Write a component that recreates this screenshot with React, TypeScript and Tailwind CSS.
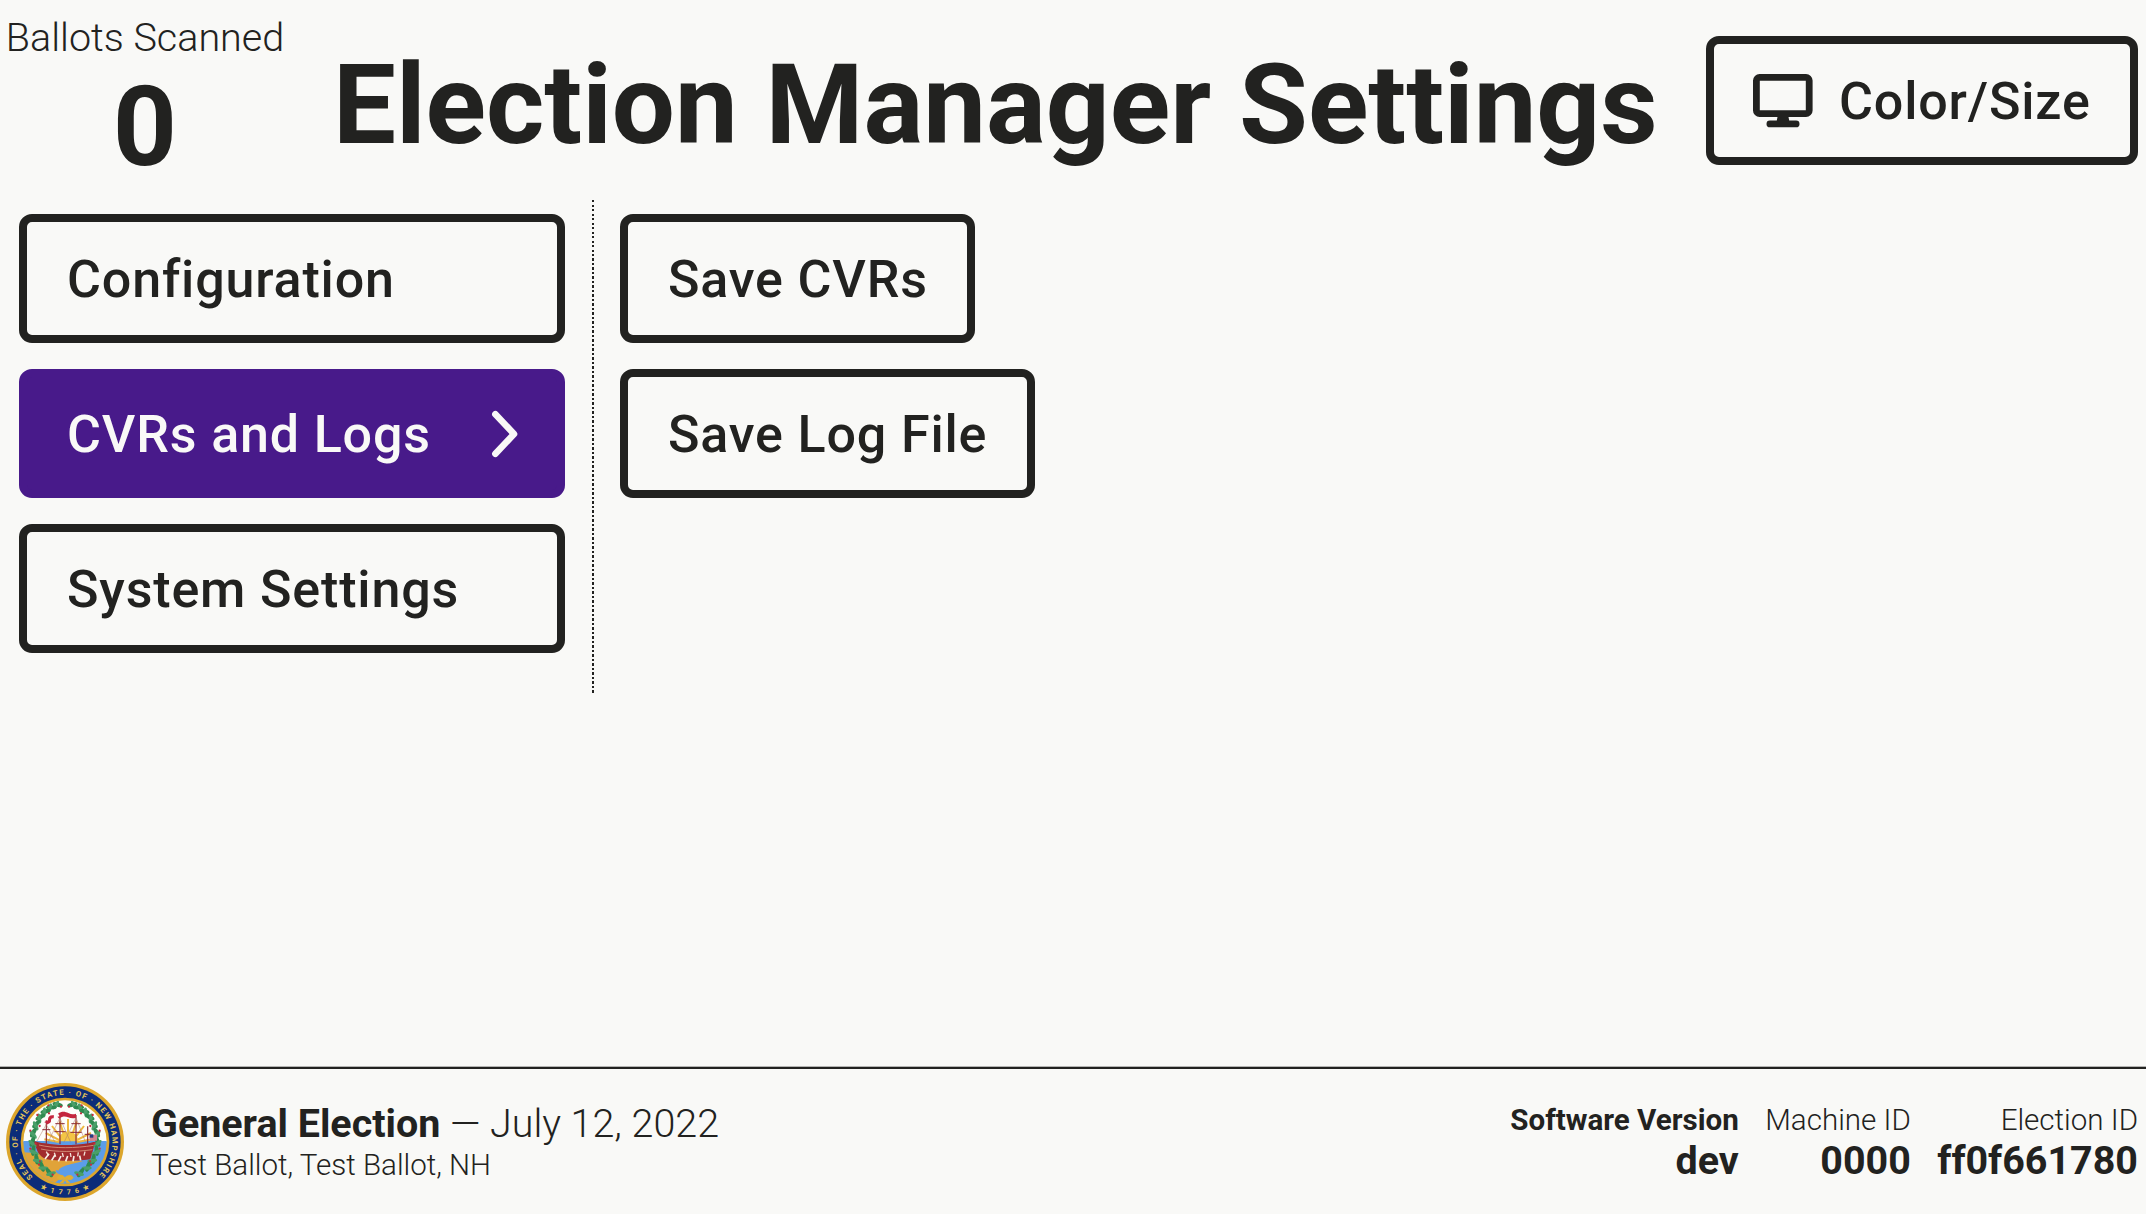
import type { ReactNode } from "react";

function Button({
  children,
  active = false,
  className = "",
}: {
  children: ReactNode;
  active?: boolean;
  className?: string;
}) {
  const tone = active
    ? "border-[#481a8a] bg-[#481a8a] text-[#f9f9f7]"
    : "border-[#222220] text-[#222220]";
  return (
    <button
      type="button"
      className={`flex h-[129px] items-center whitespace-nowrap rounded-[13px] border-8 px-10 pt-[3px] text-left text-[52px] leading-none font-medium tracking-[0.84px] ${tone} ${className}`}
    >
      {children}
    </button>
  );
}

function DisplayIcon() {
  return (
    <svg width="60" height="54" viewBox="0 0 60 54" className="-mt-[2px] shrink-0" aria-hidden="true">
      <rect x="3.4" y="3.4" width="52.8" height="36.2" rx="3.2" fill="none" stroke="#222220" strokeWidth="6.8" />
      <path
        d="M24.6 42.5h10.8l.8 4h6.9a3.4 3.4 0 0 1 0 6.8H16.9a3.4 3.4 0 0 1 0-6.8h6.9z"
        fill="#222220"
      />
    </svg>
  );
}

function Chevron() {
  return (
    <svg width="28" height="48" viewBox="0 0 28 48" className="-mt-[2px] -mr-[2px] shrink-0" aria-hidden="true">
      <path
        d="M4.4 4.2 23 24 4.4 43.8"
        fill="none"
        stroke="#f9f9f7"
        strokeWidth="6.6"
        strokeLinecap="round"
        strokeLinejoin="round"
      />
    </svg>
  );
}

const leaves: [number, number, number][] = [
  [174, 133, 160], [155, 141, 145], [138, 153, 130], [122, 170, 115], [110, 191, 100],
  [101, 217, 85], [98, 244, 75], [101, 271, 60], [111, 297, 45], [127, 319, 35], [149, 337, 20],
];

function Wreath() {
  return (
    <>
      {leaves.map(([x, y, a], i) => (
        <g key={i} transform={`translate(${x} ${y})`}>
          <ellipse rx="16" ry="6.5" fill="#2f8a50" transform={`rotate(${a + 35})`} />
          <ellipse cx="4" cy="4" rx="15" ry="5.5" fill="#4a9f69" transform={`rotate(${a - 35})`} />
          <circle cx={i % 2 ? -9 : 10} cy={i % 2 ? -6 : 6} r="3.4" fill="#c22d3f" />
        </g>
      ))}
    </>
  );
}

function StateSeal() {
  return (
    <svg
      width="118"
      height="118"
      viewBox="19 68 354 354"
      className="block"
      role="img"
      aria-label="Seal of the State of New Hampshire"
    >
      <defs>
        <clipPath id="scene">
          <circle cx="196" cy="245" r="125" />
        </clipPath>
        <path id="arc-top" d="M100 350A142 142 0 1 1 292 350" />
        <path id="arc-bottom" d="M122 384A157 157 0 0 0 270 384" />
      </defs>
      <circle cx="196" cy="245" r="177" fill="#dca62c" />
      <circle cx="196" cy="245" r="167" fill="#0b2c79" />
      <circle cx="196" cy="245" r="133" fill="#dca62c" />
      <g clipPath="url(#scene)">
        <rect x="70" y="118" width="252" height="126" fill="#fdfdfa" />
        <rect x="70" y="242" width="252" height="130" fill="#5b9de8" />
        <path
          d="M205 232V176M196 234l-16-50M214 234l17-50M188 237l-31-40M222 237l31-40M182 241l-44-23M228 241l46-23M178 245l-44-8M232 245l46-8"
          stroke="#edb83f"
          strokeWidth="6"
        />
        <path d="M176 243a30 30 0 0 1 60 0z" fill="#f3c545" />
        <path
          d="M70 276c30 2 62 2 90 14 30 8 60 10 90 12-25 8-52 12-66 20-14 9-4 18 8 24l-30 24c-45-10-85-45-92-94z"
          fill="#e0a339"
        />
        <path
          d="M96 238c14 7 26 9 40 11 40 8 90 6 130 0 7-1 12-5 24-5-8 8-10 32-18 53-30 6-105 6-136-2-14-6-22-18-26-31-4-10-9-18-14-26z"
          fill="#a12c2e"
        />
        <path d="M118 254c45 11 110 10 164 1M124 266c45 10 105 9 154 2" fill="none" stroke="#d08872" strokeWidth="3" />
        <path
          d="m140 274 6 12M164 277l4 12M188 278l3 12M212 278l2 12M236 276l-2 12M256 274l-3 12"
          stroke="#f2e2d8"
          strokeWidth="4"
        />
        <path
          d="m136 296 12-16M156 300l10-16M176 303l8-16M198 303l6-16M220 303l3-16M243 300l-3-14"
          stroke="#f6eee6"
          strokeWidth="5"
        />
        <path d="M140 180v70M181 160v92M229 164v88M264 198v52" stroke="#8c2b32" strokeWidth="3.5" />
        <path
          d="m140 192-28 50m69-70-35 72m83-72-36 74m36-74 28 72M181 174l32 72M140 192l26 54"
          fill="none"
          stroke="#b17b69"
          strokeWidth="1.5"
        />
        <path d="M128 208h24M167 190h28M164 214h34M215 190h28M212 216h34M255 222h18" stroke="#8c2b32" strokeWidth="3" />
        <path
          d="M229 160v12c-8 3-15 2-24-1-8-3-16-4-26 4l-6-6 8-1-6-8c12-9 22-6 31-2 8 4 14 5 23 2zM163 165l-1 9c-8-1-8 4-8 9-1 7-8 6-13 11l-1-6-6-2c4-6 10-3 11-8 0-10 6-15 18-13z"
          fill="#c4263e"
        />
        <path d="M168 330c22 2 50-4 90-19-8 14-26 30-50 34-20 2-39-3-40-15z" fill="#5b9de8" />
        <Wreath />
        <g transform="translate(392 0) scale(-1 1)">
          <Wreath />
        </g>
        <rect x="270" y="223" width="22" height="18" fill="#e9d5d7" />
        <path d="M270 227h22M270 233h22M270 239h22" stroke="#bd3346" strokeWidth="3" />
        <rect x="270" y="222" width="11" height="10" fill="#263d80" />
        <path
          d="M196 352c-8-8-21-9-24 0 4 8 15 8 24 0 9 8 20 8 24 0-3-9-16-8-24 0l-14 16 9-1 5-10 5 10 9 1z"
          fill="#dfae35"
          stroke="#dfae35"
          strokeWidth="3"
        />
      </g>
      <g fill="#e6c658" fontFamily="Roboto, sans-serif" fontWeight="700">
        <text fontSize="23">
          <textPath href="#arc-top" textLength="672" lengthAdjust="spacing">
            SEAL · OF · THE · STATE · OF · NEW HAMPSHIRE
          </textPath>
        </text>
        <text fontSize="21">
          <textPath href="#arc-bottom" textLength="152" lengthAdjust="spacing">
            ★1776★
          </textPath>
        </text>
      </g>
    </svg>
  );
}

function Meta({ label, value, strong = false }: { label: string; value: string; strong?: boolean }) {
  return (
    <div className="flex flex-col items-end whitespace-nowrap">
      <span className={`text-[29.55px] leading-[40px] ${strong ? "font-bold" : "font-light"}`}>{label}</span>
      <span className="text-[39.45px] leading-[41px] font-bold">{value}</span>
    </div>
  );
}

export default function App() {
  return (
    <div className="flex h-[1214px] w-[2146px] flex-col overflow-hidden bg-[#f9f9f7] font-['Roboto',sans-serif] text-[#222220]">
      <header className="flex h-[200px] shrink-0 items-start pr-2 pl-[6px]">
        <div className="flex w-[278px] flex-col items-center pt-[15px]">
          <span className="text-[39.5px] leading-[46px] font-light whitespace-nowrap">Ballots Scanned</span>
          <span className="mt-[10px] text-[112px] leading-[112px] font-bold">0</span>
        </div>
        <h1 className="mt-[49px] ml-[49px] text-[111.9px] leading-[112px] font-bold whitespace-nowrap">
          Election Manager Settings
        </h1>
        <Button className="mt-[36px] ml-auto w-[432px] pl-[39px]">
          <span className="flex items-center">
            <DisplayIcon />
            <span className="ml-[26px]">Color/Size</span>
          </span>
        </Button>
      </header>

      <main className="flex min-h-0 flex-1 items-start pl-[19px]">
        <nav className="flex w-[546px] flex-col gap-[26px] pt-[14px]">
          <Button>Configuration</Button>
          <Button active className="justify-between">
            <span>CVRs and Logs</span>
            <Chevron />
          </Button>
          <Button>System Settings</Button>
        </nav>
        <div className="ml-[27px] h-[493px] w-[2px] bg-[repeating-linear-gradient(to_bottom,#222220_0_2.25px,transparent_2.25px_4.5px)]" />
        <section className="ml-[26px] flex flex-col items-start gap-[26px] pt-[14px]">
          <Button className="w-[355px]">Save CVRs</Button>
          <Button>Save Log File</Button>
        </section>
      </main>

      <footer className="flex h-[147px] shrink-0 items-start border-t-2 border-[#222220] pr-2 pl-[6px] shadow-[0_-1px_0_#b4b4b2]">
        <div className="mt-[14px]">
          <StateSeal />
        </div>
        <div className="mt-[34px] ml-[27px] whitespace-nowrap">
          <p className="text-[39.45px] leading-[42px]">
            <span className="font-bold">General Election</span>
            <span className="font-light"> — July 12, 2022</span>
          </p>
          <p className="text-[29.55px] leading-[40px] font-light">Test Ballot, Test Ballot, NH</p>
        </div>
        <div className="mt-[31px] ml-auto flex gap-[26.5px]">
          <Meta label="Software Version" value="dev" strong />
          <Meta label="Machine ID" value="0000" />
          <Meta label="Election ID" value="ff0f661780" />
        </div>
      </footer>
    </div>
  );
}
